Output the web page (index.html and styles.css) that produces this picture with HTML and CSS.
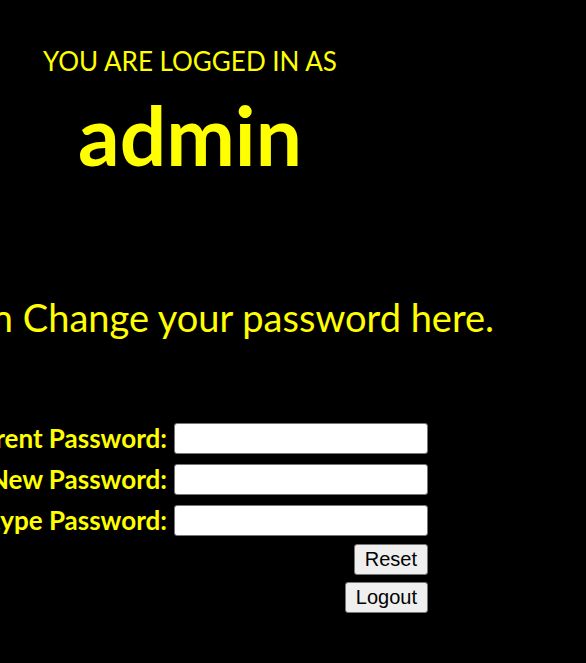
FILE: index.html
```html
<!DOCTYPE html>
<html lang="en">
<head>
<meta charset="utf-8">
<title>Account</title>
<link rel="stylesheet" href="styles.css">
</head>
<body>
  <header class="who">
    <div class="who-label">YOU ARE LOGGED IN AS</div>
    <div class="who-name">admin</div>
  </header>

  <div class="intro">
    <p class="intro-text">Welcome admin Change your password here.</p>
  </div>

  <form class="pw-form">
    <div class="pw-row">
      <label class="pw-label" for="cur">Current Password:</label>
      <input class="pw-input" id="cur" type="password">
    </div>
    <div class="pw-row">
      <label class="pw-label" for="new">New Password:</label>
      <input class="pw-input" id="new" type="password">
    </div>
    <div class="pw-row">
      <label class="pw-label" for="re">Retype Password:</label>
      <input class="pw-input" id="re" type="password">
    </div>
    <div class="btn-row">
      <button class="btn" type="reset">Reset</button>
    </div>
    <div class="btn-row">
      <button class="btn" type="button">Logout</button>
    </div>
  </form>
</body>
</html>
```

FILE: styles.css
```css
html, body {
  margin: 0;
  padding: 0;
  background: #000;
}

body {
  color: #ffff00;
  font-family: "Source Sans Pro", Lato, "Noto Sans", sans-serif;
  overflow: hidden;
}

/* signed-in banner */
.who {
  width: 380px;
  padding-top: 44px;
  text-align: center;
}

.who-label {
  font-size: 26px;
  line-height: 34px;
}

.who-name {
  margin-top: 8px;
  font-size: 82px;
  font-weight: 700;
  line-height: 96px;
}

/* intro line, pinned to its right edge */
.intro {
  width: 494px;
  display: flex;
  justify-content: flex-end;
  margin-top: 111px;
}

.intro-text {
  margin: 0;
  font-size: 38px;
  line-height: 48px;
  white-space: nowrap;
  flex-shrink: 0;
}

/* password form */
.pw-form {
  width: 428px;
  margin-top: 82px;
  display: flex;
  flex-direction: column;
  gap: 10px;
}

.pw-row,
.btn-row {
  display: flex;
  justify-content: flex-end;
  align-items: center;
}

.pw-label {
  flex-shrink: 0;
  white-space: nowrap;
  margin-right: 7px;
  font-size: 26px;
  font-weight: 700;
  line-height: 31px;
}

.pw-input {
  flex-shrink: 0;
  box-sizing: border-box;
  width: 254px;
  height: 31px;
  margin: 0;
  border: 1px solid #767676;
  border-radius: 3px;
  background: #fff;
}

.btn-row + .btn-row {
  margin-top: -3px;
}

.pw-row + .btn-row {
  margin-top: -2px;
}

.btn {
  flex-shrink: 0;
  box-sizing: border-box;
  height: 31px;
  margin: 0;
  padding: 0 10px;
  border: 1px solid #767676;
  border-radius: 3px;
  background: #efefef;
  color: #000;
  font-family: "Liberation Sans", Arial, sans-serif;
  font-size: 20px;
}
```
